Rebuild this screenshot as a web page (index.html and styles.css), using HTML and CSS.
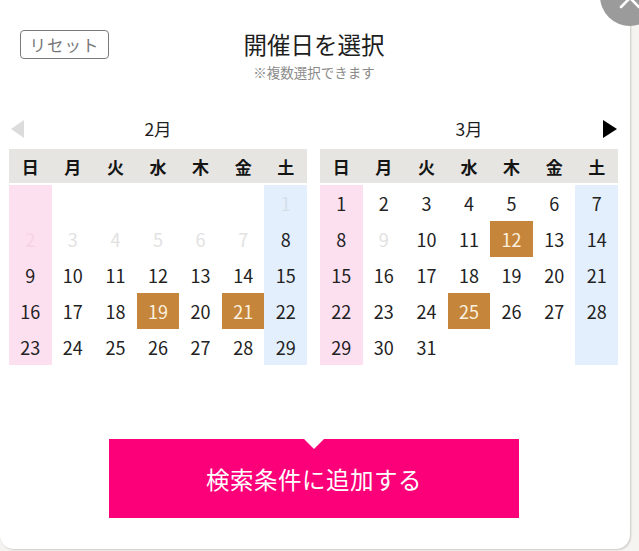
FILE: index.html
```html
<!DOCTYPE html>
<html lang="ja">
<head>
<meta charset="utf-8">
<title>開催日を選択</title>
<link rel="stylesheet" href="styles.css">
</head>
<body>
<div class="panel">
  <div class="head">
    <div class="head-left"><button class="reset">リセット</button></div>
    <h1 class="title">開催日を選択</h1>
    <div></div>
  </div>
  <p class="sub">※複数選択できます</p>

  <div class="cals">
    <div class="cal">
      <div class="nav">
        <span class="arrow arrow-left"></span>
        <span class="month">2月</span>
        <span class="arrow-space"></span>
      </div>
      <div class="grid">
        <div class="wd sun">日</div><div class="wd">月</div><div class="wd">火</div><div class="wd">水</div><div class="wd">木</div><div class="wd">金</div><div class="wd sat">土</div>

        <div class="d sun"></div><div class="d"></div><div class="d"></div><div class="d"></div><div class="d"></div><div class="d"></div><div class="d sat off">1</div>
        <div class="d sun off">2</div><div class="d off">3</div><div class="d off">4</div><div class="d off">5</div><div class="d off">6</div><div class="d off">7</div><div class="d sat">8</div>
        <div class="d sun">9</div><div class="d">10</div><div class="d">11</div><div class="d">12</div><div class="d">13</div><div class="d">14</div><div class="d sat">15</div>
        <div class="d sun">16</div><div class="d">17</div><div class="d">18</div><div class="d sel">19</div><div class="d">20</div><div class="d sel">21</div><div class="d sat">22</div>
        <div class="d sun">23</div><div class="d">24</div><div class="d">25</div><div class="d">26</div><div class="d">27</div><div class="d">28</div><div class="d sat">29</div>
      </div>
    </div>

    <div class="cal">
      <div class="nav">
        <span class="arrow-space"></span>
        <span class="month">3月</span>
        <span class="arrow arrow-right"></span>
      </div>
      <div class="grid">
        <div class="wd sun">日</div><div class="wd">月</div><div class="wd">火</div><div class="wd">水</div><div class="wd">木</div><div class="wd">金</div><div class="wd sat">土</div>

        <div class="d sun">1</div><div class="d">2</div><div class="d">3</div><div class="d">4</div><div class="d">5</div><div class="d">6</div><div class="d sat">7</div>
        <div class="d sun">8</div><div class="d off">9</div><div class="d">10</div><div class="d">11</div><div class="d sel">12</div><div class="d">13</div><div class="d sat">14</div>
        <div class="d sun">15</div><div class="d">16</div><div class="d">17</div><div class="d">18</div><div class="d">19</div><div class="d">20</div><div class="d sat">21</div>
        <div class="d sun">22</div><div class="d">23</div><div class="d">24</div><div class="d sel">25</div><div class="d">26</div><div class="d">27</div><div class="d sat">28</div>
        <div class="d sun">29</div><div class="d">30</div><div class="d">31</div><div class="d"></div><div class="d"></div><div class="d"></div><div class="d sat"></div>
      </div>
    </div>
  </div>

  <div class="action">
    <button class="submit">検索条件に追加する</button>
  </div>

  <svg class="close" width="70" height="40" viewBox="0 0 70 40" aria-label="閉じる">
    <circle cx="35" cy="-4" r="30" fill="#9b9b9b"/>
    <path d="M26 7 L44 -11 M26 -11 L44 7" stroke="#ffffff" stroke-width="2.6" stroke-linecap="round" fill="none"/>
  </svg>
</div>
</body>
</html>
```

FILE: styles.css
```css
* { box-sizing: border-box; }

html, body {
  margin: 0;
  padding: 0;
}

body {
  width: 639px;
  height: 551px;
  overflow: hidden;
  background: #f5f4f1;
  font-family: "Noto Sans CJK JP", "Noto Sans", sans-serif;
  color: #222;
}

.panel {
  position: relative;
  width: 630px;
  height: 549px;
  background: #ffffff;
  border-radius: 0 0 14px 14px;
  box-shadow: 1px 1px 2px rgba(0,0,0,0.18);
  padding-top: 30px;
}

.head {
  display: grid;
  grid-template-columns: 1fr auto 1fr;
  align-items: center;
  height: 29px;
}

.head-left {
  padding-left: 20px;
}

.reset {
  display: block;
  width: 89px;
  height: 29px;
  padding: 0;
  border: 1px solid #7a7a7a;
  border-radius: 4px;
  background: #fff;
  color: #777;
  font-family: inherit;
  font-size: 16.5px;
  line-height: 26px;
  letter-spacing: 1px;
}

.title {
  margin: 0;
  font-size: 23.5px;
  font-weight: 400;
  line-height: 29px;
  color: #1e1e1e;
  transform: translateX(-1px);
}

.sub {
  margin: 5px 0 0;
  text-align: center;
  font-size: 13.5px;
  line-height: 16px;
  color: #8a8a8a;
  transform: translateX(-1px);
}

.cals {
  display: flex;
  gap: 13px;
  padding-left: 9px;
  margin-top: 39px;
}

.cal {
  width: 298px;
}

.nav {
  display: flex;
  align-items: center;
  justify-content: space-between;
  height: 20px;
  margin-bottom: 10px;
}

.month {
  font-size: 17.5px;
  line-height: 20px;
  color: #1e1e1e;
}

.arrow, .arrow-space {
  width: 15px;
  height: 18px;
}

.arrow-left {
  margin-left: 2px;
  border-top: 9px solid transparent;
  border-bottom: 9px solid transparent;
  border-right: 13px solid #dcdcdc;
  width: 0;
  height: 0;
}

.arrow-right {
  margin-right: 1px;
  border-top: 9px solid transparent;
  border-bottom: 9px solid transparent;
  border-left: 14px solid #000;
  width: 0;
  height: 0;
}

.grid {
  display: grid;
  grid-template-columns: repeat(7, 1fr);
  grid-auto-rows: 36px;
}

.wd {
  height: 34px;
  background: #e6e5e2;
  display: flex;
  align-items: center;
  justify-content: center;
  font-size: 17px;
  font-weight: 700;
  color: #151515;
}

.d {
  display: flex;
  align-items: center;
  justify-content: center;
  font-size: 18px;
  color: #222;
}

.d.sun { background: #fde0f0; }
.d.sat { background: #e3effc; }

.d.off { color: #e2e2e2; }
.d.sun.off { color: #f5d3e4; }
.d.sat.off { color: #d5dfea; }

.d.sel {
  background: #c5853b;
  color: #fbf0df;
}

.action {
  display: flex;
  justify-content: center;
  margin-top: 74px;
}

.submit {
  position: relative;
  width: 410px;
  height: 79px;
  margin-left: -2px;
  border: none;
  padding: 0;
  background: #fb0079;
  color: #fff;
  font-family: inherit;
  font-size: 23.5px;
  letter-spacing: 0.5px;
}

.submit::before {
  content: "";
  position: absolute;
  top: 0;
  left: 50%;
  margin-left: -10px;
  border-left: 10px solid transparent;
  border-right: 10px solid transparent;
  border-top: 10px solid #fff;
}

.close {
  position: absolute;
  top: 0;
  left: 595px;
}
```
